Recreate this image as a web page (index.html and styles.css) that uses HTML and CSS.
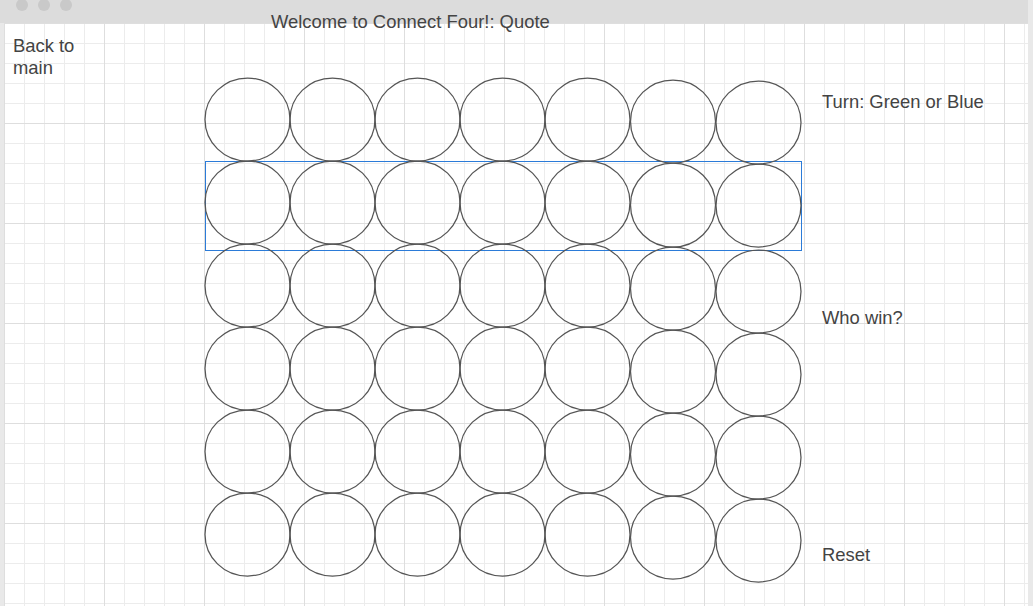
FILE: index.html
```html
<!DOCTYPE html>
<html lang="en">
<head>
<meta charset="utf-8">
<title>Connect Four</title>
<link rel="stylesheet" href="styles.css">
</head>
<body>
<div class="app">
  <header class="titlebar">
    <div class="dots"><span class="dot"></span><span class="dot"></span><span class="dot"></span></div>
    <div class="title">Welcome to Connect Four!: Quote</div>
  </header>
  <main class="canvas">
    <nav class="side-left">
      <a class="back">Back to<br>main</a>
    </nav>
    <section class="board">
      <svg class="board-svg" width="600" height="510" viewBox="0 0 600 510">
        <rect class="row-select" x="1.5" y="84.5" width="596" height="89"></rect>
        <g class="holes">
          <!-- row 1 -->
          <ellipse cx="43.5" cy="42.5" rx="42.5" ry="41.5"/>
          <ellipse cx="128.5" cy="42.5" rx="42.5" ry="41.5"/>
          <ellipse cx="213.5" cy="42.5" rx="42.5" ry="41.5"/>
          <ellipse cx="298.5" cy="42.5" rx="42.5" ry="41.5"/>
          <ellipse cx="383.5" cy="42.5" rx="42.5" ry="41.5"/>
          <ellipse cx="469" cy="44.5" rx="42.5" ry="41.5"/>
          <ellipse cx="554.5" cy="45.5" rx="42.5" ry="41.5"/>
          <!-- row 2 -->
          <ellipse cx="43.5" cy="125.5" rx="42.5" ry="41.5"/>
          <ellipse cx="128.5" cy="125.5" rx="42.5" ry="41.5"/>
          <ellipse cx="213.5" cy="125.5" rx="42.5" ry="41.5"/>
          <ellipse cx="298.5" cy="125.5" rx="42.5" ry="41.5"/>
          <ellipse cx="383.5" cy="125.5" rx="42.5" ry="41.5"/>
          <ellipse cx="469" cy="128" rx="42.5" ry="42"/>
          <ellipse cx="554.5" cy="128.5" rx="42.5" ry="41.5"/>
          <!-- row 3 -->
          <ellipse cx="43.5" cy="208.5" rx="42.5" ry="41.5"/>
          <ellipse cx="128.5" cy="208.5" rx="42.5" ry="41.5"/>
          <ellipse cx="213.5" cy="208.5" rx="42.5" ry="41.5"/>
          <ellipse cx="298.5" cy="208.5" rx="42.5" ry="41.5"/>
          <ellipse cx="383.5" cy="208.5" rx="42.5" ry="41.5"/>
          <ellipse cx="469" cy="211.5" rx="42.5" ry="41.5"/>
          <ellipse cx="554.5" cy="214.5" rx="42.5" ry="41.5"/>
          <!-- row 4 -->
          <ellipse cx="43.5" cy="291.5" rx="42.5" ry="41.5"/>
          <ellipse cx="128.5" cy="291.5" rx="42.5" ry="41.5"/>
          <ellipse cx="213.5" cy="291.5" rx="42.5" ry="41.5"/>
          <ellipse cx="298.5" cy="291.5" rx="42.5" ry="41.5"/>
          <ellipse cx="383.5" cy="291.5" rx="42.5" ry="41.5"/>
          <ellipse cx="469" cy="294.5" rx="42.5" ry="41.5"/>
          <ellipse cx="554.5" cy="297.5" rx="42.5" ry="41.5"/>
          <!-- row 5 -->
          <ellipse cx="43.5" cy="374.5" rx="42.5" ry="41.5"/>
          <ellipse cx="128.5" cy="374.5" rx="42.5" ry="41.5"/>
          <ellipse cx="213.5" cy="374.5" rx="42.5" ry="41.5"/>
          <ellipse cx="298.5" cy="374.5" rx="42.5" ry="41.5"/>
          <ellipse cx="383.5" cy="374.5" rx="42.5" ry="41.5"/>
          <ellipse cx="469" cy="377.5" rx="42.5" ry="41.5"/>
          <ellipse cx="554.5" cy="380.5" rx="42.5" ry="41.5"/>
          <!-- row 6 -->
          <ellipse cx="43.5" cy="457.5" rx="42.5" ry="41.5"/>
          <ellipse cx="128.5" cy="457.5" rx="42.5" ry="41.5"/>
          <ellipse cx="213.5" cy="457.5" rx="42.5" ry="41.5"/>
          <ellipse cx="298.5" cy="457.5" rx="42.5" ry="41.5"/>
          <ellipse cx="383.5" cy="457.5" rx="42.5" ry="41.5"/>
          <ellipse cx="469" cy="460.5" rx="42.5" ry="41.5"/>
          <ellipse cx="554.5" cy="463.5" rx="42.5" ry="41.5"/>
        </g>
      </svg>
    </section>
    <aside class="side-right">
      <div class="turn">Turn: Green or Blue</div>
      <div class="winner">Who win?</div>
      <div class="reset">Reset</div>
    </aside>
  </main>
</div>
</body>
</html>
```

FILE: styles.css
```css
html, body {
  margin: 0;
  padding: 0;
}

body {
  background: #e9e9e9;
  font-family: "Liberation Sans", Arial, Helvetica, sans-serif;
  color: #434343;
  overflow: hidden;
}

.app {
  width: 1033px;
  height: 606px;
  display: flex;
  flex-direction: column;
}

.titlebar {
  height: 23px;
  margin-right: 5px;
  background: #dcdcdc;
  display: flex;
  align-items: flex-start;
  flex-shrink: 0;
  position: relative;
  z-index: 1;
}

.dots {
  display: flex;
  gap: 10px;
  padding-left: 16px;
  margin-top: -1px;
}

.dot {
  width: 12px;
  height: 12px;
  border-radius: 50%;
  background: #c9c9c9;
}

.title {
  margin-left: 199px;
  margin-top: 11px;
  font-size: 18.4px;
  line-height: 22px;
  white-space: nowrap;
  color: #444;
}

.canvas {
  flex: 1;
  margin: 0 5px 0 4px;
  display: flex;
  align-items: flex-start;
  background-color: #fff;
  background-image:
    linear-gradient(#dedede 1px, transparent 1px),
    linear-gradient(90deg, #dedede 1px, transparent 1px),
    linear-gradient(#ececec 1px, transparent 1px),
    linear-gradient(90deg, #ececec 1px, transparent 1px);
  background-size: 100px 100px, 100px 100px, 20px 20px, 20px 20px;
}

.side-left {
  width: 191px;
  padding: 12px 0 0 9px;
}

.back {
  display: block;
  font-size: 18.4px;
  line-height: 22px;
  color: #434343;
  text-decoration: none;
}

.board {
  margin-top: 54px;
  width: 600px;
  height: 510px;
}

.board-svg {
  display: block;
}

.row-select {
  fill: none;
  stroke: #2b7bd8;
  stroke-width: 1;
}

.holes ellipse {
  fill: none;
  stroke: #555;
  stroke-width: 1.25;
}

.side-right {
  margin-left: 18px;
  padding-top: 68px;
  display: flex;
  flex-direction: column;
  font-size: 18.4px;
  line-height: 22px;
  white-space: nowrap;
}

.winner {
  margin-top: 194px;
}

.reset {
  margin-top: 215px;
}
```
